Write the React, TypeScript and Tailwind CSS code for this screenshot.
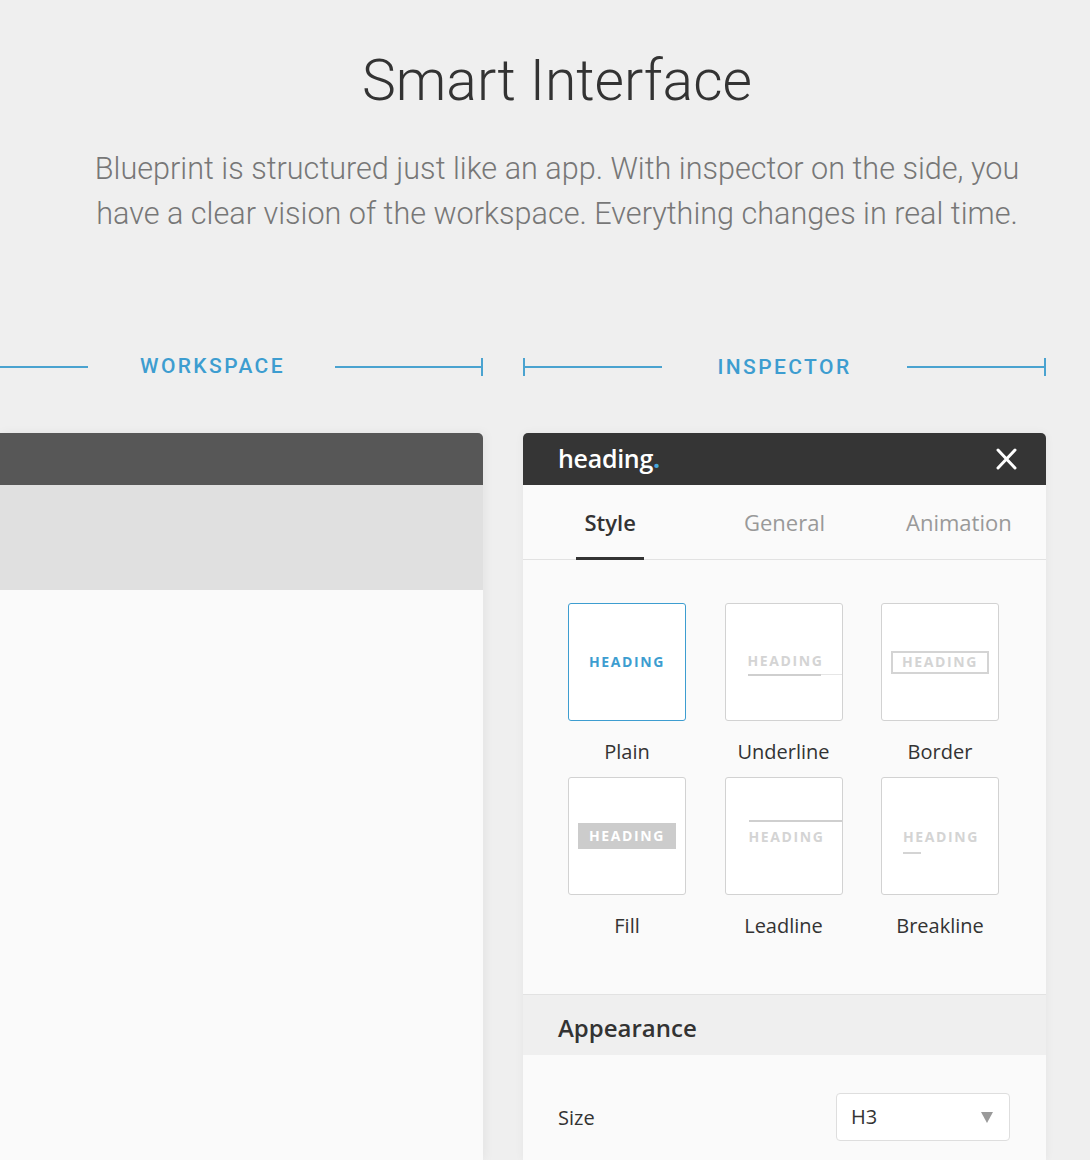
import React from 'react';

const roboto = "font-['Roboto',sans-serif]";
const openSans = "font-['Open_Sans',sans-serif]";

function Rule({ tickLeft, tickRight, className }: { tickLeft?: boolean; tickRight?: boolean; className: string }) {
  return (
    <div className={`flex items-center ${className}`}>
      {tickLeft && <div className="w-[2px] h-[18px] bg-[#4aa3d0]" />}
      <div className="flex-1 h-[2px] bg-[#4aa3d0]" />
      {tickRight && <div className="w-[2px] h-[18px] bg-[#4aa3d0]" />}
    </div>
  );
}

function SectionLabel({ children }: { children: React.ReactNode }) {
  return (
    <span className={`${roboto} font-medium text-[21px] leading-none tracking-[2.4px] text-[#3d9dd0]`}>
      {children}
    </span>
  );
}

const tileText = `${openSans} font-bold text-[14px] leading-none tracking-[1.6px]`;

function StyleTile({ label, selected, children }: { label: string; selected?: boolean; children: React.ReactNode }) {
  return (
    <div className="flex flex-col items-center">
      <div
        className={`w-[118px] h-[118px] rounded-[3px] bg-white border flex items-center justify-center relative ${
          selected ? 'border-[#3d9dd0]' : 'border-[#d2d2d2]'
        }`}
      >
        {children}
      </div>
      <div className={`${openSans} h-[56px] pt-[14px] leading-[34px] text-[20px] text-[#333]`}>{label}</div>
    </div>
  );
}

export default function App() {
  return (
    <div className="min-h-screen bg-white">
      <div className="bg-[#efefef] h-[1160px] overflow-hidden w-[1090px]">
        {/* intro */}
        <div className="w-[1114px] text-center pt-[47px]">
          <h1 className={`${roboto} font-light text-[57px] leading-[67px] text-[#333]`}>Smart Interface</h1>
          <p className={`${roboto} font-light text-[30.6px] leading-[45px] text-[#777] mt-[32px]`}>
            Blueprint is structured just like an app. With inspector on the side, you
            <br />
            have a clear vision of the workspace. Everything changes in real time.
          </p>
        </div>

        {/* section labels */}
        <div className="flex mt-[121px] h-[20px] items-center">
          <div className="w-[483px] flex items-center">
            <Rule className="w-[88px]" />
            <div className="ml-[52px]">
              <SectionLabel>WORKSPACE</SectionLabel>
            </div>
            <Rule className="flex-1 ml-[50px]" tickRight />
          </div>
          <div className="w-[523px] ml-[40px] flex items-center">
            <Rule className="w-[139px]" tickLeft />
            <div className="flex-1 flex justify-center">
              <SectionLabel>INSPECTOR</SectionLabel>
            </div>
            <Rule className="w-[139px]" tickRight />
          </div>
        </div>

        {/* panels */}
        <div className="flex mt-[56px] h-[727px]">
          {/* workspace */}
          <div className="w-[483px] flex flex-col shadow-[2px_0_10px_rgba(0,0,0,0.05)]">
            <div className="h-[52px] bg-[#575757] rounded-tr-[5px]" />
            <div className="h-[105px] bg-[#e0e0e0]" />
            <div className="flex-1 bg-[#fafafa]" />
          </div>

          {/* inspector */}
          <div className="w-[523px] ml-[40px] flex flex-col bg-[#fafafa] rounded-t-[5px] shadow-[0_0_10px_rgba(0,0,0,0.05)]">
            <div className="h-[52px] bg-[#353535] rounded-t-[5px] flex items-center justify-between pl-[35px] pr-[28px]">
              <span className={`${openSans} font-semibold text-[25px] text-white tracking-[-0.3px]`}>
                heading<span className="text-[#4aa8dc] font-bold">.</span>
              </span>
              <svg width="22" height="22" viewBox="0 0 22 22" className="mr-[1px]">
                <path d="M3 2 L20 20 M20 2 L3 20" stroke="#fff" strokeWidth="3" strokeLinecap="round" />
              </svg>
            </div>

            <div className="h-[75px] grid grid-cols-3 border-b border-[#e2e2e2]">
              <div className="flex justify-center">
                <div className="relative h-full flex items-center px-[8px]">
                  <span className={`${openSans} font-semibold text-[22px] text-[#333]`}>Style</span>
                  <div className="absolute left-0 right-0 bottom-[-1px] h-[3px] bg-[#333]" />
                </div>
              </div>
              <div className="flex items-center justify-center">
                <span className={`${openSans} text-[22px] text-[#999]`}>General</span>
              </div>
              <div className="flex items-center justify-center">
                <span className={`${openSans} text-[22px] text-[#999]`}>Animation</span>
              </div>
            </div>

            <div className="grid grid-cols-[118px_118px_118px] gap-x-[38.5px] pl-[45px] pt-[43px] pb-[43px] border-b border-[#e2e2e2]">
              <StyleTile label="Plain" selected>
                <span className={`${tileText} text-[#3d9dd0]`}>HEADING</span>
              </StyleTile>
              <StyleTile label="Underline">
                <div className="flex flex-col items-start ml-[22px] mt-[6px] w-full">
                  <span className={`${tileText} text-[#d4d4d4]`}>HEADING</span>
                  <div className="flex w-full mt-[6px] items-start">
                    <div className="w-[73px] h-[2px] bg-[#cfcfcf]" />
                    <div className="flex-1 h-px bg-[#e6e6e6]" />
                  </div>
                </div>
              </StyleTile>
              <StyleTile label="Border">
                <div className="w-[98px] h-[23px] border-2 border-[#d4d4d4] flex items-center justify-center">
                  <span className={`${tileText} text-[#d4d4d4]`}>HEADING</span>
                </div>
              </StyleTile>
              <StyleTile label="Fill">
                <div className="w-[98px] h-[26px] bg-[#cccccc] flex items-center justify-center">
                  <span className={`${tileText} text-white`}>HEADING</span>
                </div>
              </StyleTile>
              <StyleTile label="Leadline">
                <div className="flex flex-col items-start ml-[23px] mt-[-8px] w-full">
                  <div className="w-full h-[2px] bg-[#cfcfcf]" />
                  <span className={`${tileText} text-[#d4d4d4] mt-[8px]`}>HEADING</span>
                </div>
              </StyleTile>
              <StyleTile label="Breakline">
                <div className="flex flex-col items-start mt-[12px] ml-[2px]">
                  <span className={`${tileText} text-[#d4d4d4]`}>HEADING</span>
                  <div className="w-[18px] h-[2px] bg-[#d4d4d4] mt-[8px]" />
                </div>
              </StyleTile>
            </div>

            <div className="h-[60px] bg-[#efefef] flex items-center pl-[35px] pt-[6px]">
              <span className={`${openSans} font-semibold text-[24px] text-[#333]`}>Appearance</span>
            </div>

            <div className="flex items-center justify-between pl-[35px] pr-[36px] mt-[38px]">
              <span className={`${openSans} text-[20px] text-[#333] pt-[2px]`}>Size</span>
              <div className="w-[174px] h-[48px] bg-white border border-[#dedede] rounded-[4px] flex items-center justify-between pl-[14px] pr-[16px]">
                <span className={`${openSans} text-[20px] text-[#333]`}>H3</span>
                <svg width="12" height="12" viewBox="0 0 12 12">
                  <path d="M0 1 H12 L6 12 Z" fill="#9a9a9a" />
                </svg>
              </div>
            </div>
          </div>
        </div>
      </div>
    </div>
  );
}
